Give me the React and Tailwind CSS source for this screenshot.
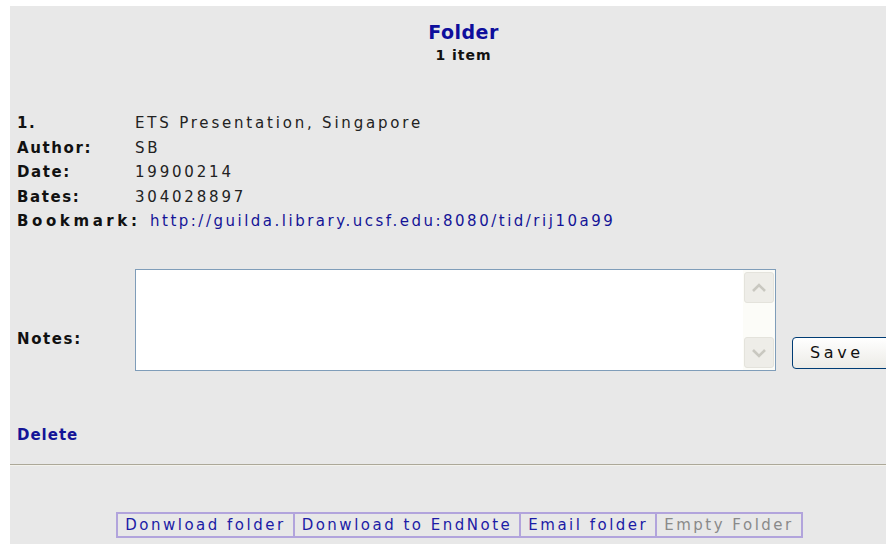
import React from "react";

const font = { fontFamily: '"DejaVu Sans", Verdana, sans-serif' };

// one label/value line of the item record
function Field({ label, children }) {
  return (
    <div className="flex h-[24.5px] items-center">
      <div className="w-[118px] shrink-0 text-[15px] font-bold tracking-[1.6px] text-[#111]">{label}</div>
      <div className="text-[15px] tracking-[2.8px] text-[#222]">{children}</div>
    </div>
  );
}

function ScrollButton({ up }) {
  return (
    <div className="flex h-[31px] w-[30px] items-center justify-center rounded-[3px] border border-[#e4e3dc] bg-[#eeede8]">
      <svg width="16" height="10" viewBox="0 0 16 10">
        <path
          d={up ? "M2 8 L8 2 L14 8" : "M2 2 L8 8 L14 2"}
          fill="none"
          stroke="#c9c8c0"
          strokeWidth="2.6"
        />
      </svg>
    </div>
  );
}

export default function App() {
  const actions = [
    { label: "Donwload folder", active: true },
    { label: "Donwload to EndNote", active: true },
    { label: "Email folder", active: true },
    { label: "Empty Folder", active: false },
  ];

  return (
    <div className="h-[544px] w-[886px] overflow-hidden bg-white pl-[10px] pt-[6px]" style={font}>
      <div className="h-[600px] w-[900px] bg-[#e8e8e8] pl-[7px]">
        {/* heading */}
        <div className="pt-[14px] text-center">
          <div className="text-[19px] font-bold leading-[24px] tracking-[0.5px] text-[#0e0e9c]">Folder</div>
          <div className="mt-[2px] text-[14px] font-bold leading-[18px] tracking-[1px] text-[#111]">1 item</div>
        </div>

        {/* item record */}
        <div className="mt-[47px]">
          <Field label="1.">ETS Presentation, Singapore</Field>
          <Field label="Author:">SB</Field>
          <Field label="Date:">19900214</Field>
          <Field label="Bates:">304028897</Field>
          <div className="flex h-[24.5px] items-center">
            <div className="w-[133px] shrink-0 text-[15px] font-bold tracking-[3.6px] text-[#111]">Bookmark:</div>
            <a href="#" className="text-[15px] tracking-[2.5px] text-[#141497]">
              http://guilda.library.ucsf.edu:8080/tid/rij10a99
            </a>
          </div>
        </div>

        {/* notes */}
        <div className="mt-[35.5px] flex items-end">
          <div className="mb-[22px] w-[118px] shrink-0 text-[15px] font-bold leading-[20px] tracking-[1.6px] text-[#111]">
            Notes:
          </div>
          <div className="flex h-[102px] w-[641px] border border-[#7f9db9] bg-white">
            <textarea className="h-full flex-1 resize-none bg-white outline-none" />
            <div className="flex w-[32px] flex-col justify-between bg-[#fcfcf8] py-[2px] pl-[1px]">
              <ScrollButton up />
              <ScrollButton />
            </div>
          </div>
          <button className="mb-[2px] ml-[16px] h-[32px] w-[100px] rounded-[4px] border border-[#003c74] bg-gradient-to-b from-white to-[#ecebe6] pl-[17px] text-left text-[16px] tracking-[3.6px] text-[#111]">
            Save
          </button>
        </div>

        <div className="mt-[54px] text-[15px] font-bold leading-[20px] tracking-[1px] text-[#141497]">Delete</div>

        {/* divider */}
        <div className="-ml-[7px] mt-[19px]">
          <div className="h-px bg-[#aca899]" />
          <div className="h-px bg-[#f3f2ec]" />
        </div>

        {/* folder actions */}
        <div className="mt-[46px] flex justify-center pr-[8px]">
          <div className="flex border-2 border-[#b2a4dc]">
            {actions.map((a, i) => (
              <a
                key={a.label}
                href="#"
                className={`px-[7px] text-[15px] leading-[22px] tracking-[2.5px] ${
                  i > 0 ? "border-l-2 border-[#b2a4dc]" : ""
                } ${a.active ? "text-[#1c1ca6]" : "text-[#8a8a8a]"}`}
              >
                {a.label}
              </a>
            ))}
          </div>
        </div>
      </div>
    </div>
  );
}
